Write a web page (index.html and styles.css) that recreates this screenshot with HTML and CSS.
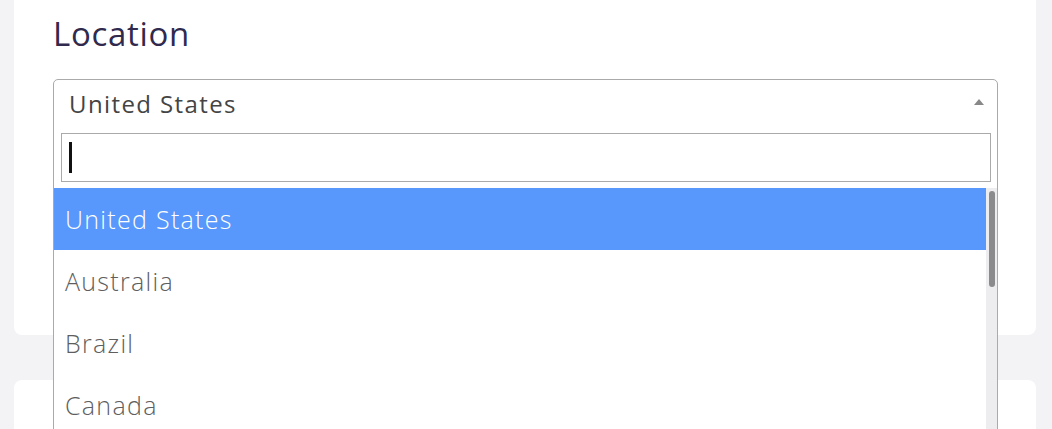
FILE: index.html
```html
<!DOCTYPE html>
<html lang="en">
<head>
<meta charset="utf-8">
<title>Location</title>
<link rel="stylesheet" href="styles.css">
</head>
<body>
<div class="page">
  <section class="card card-location">
    <h2 class="card-title">Location</h2>
    <div class="select">
      <div class="select-box">
        <span class="select-value">United States</span>
        <span class="select-arrow"></span>
      </div>
      <div class="dropdown">
        <div class="search-wrap">
          <div class="search-field"><span class="caret"></span></div>
        </div>
        <div class="results">
          <ul class="options">
            <li class="option option-active">United States</li>
            <li class="option">Australia</li>
            <li class="option">Brazil</li>
            <li class="option">Canada</li>
          </ul>
          <div class="scrollbar"><div class="thumb"></div></div>
        </div>
      </div>
    </div>
  </section>
  <section class="card card-next"></section>
</div>
</body>
</html>
```
FILE: styles.css
```css
html, body {
  margin: 0;
  padding: 0;
}
body {
  background: #f3f3f6;
  font-family: "Open Sans", Lato, sans-serif;
  overflow: hidden;
  height: 429px;
}
.page {
  display: flex;
  flex-direction: column;
  gap: 45px;
  padding: 0 16px 0 14px;
}
.card {
  background: #ffffff;
  border-radius: 8px;
}
.card-location {
  height: 345px;
  margin-top: -10px;
  padding: 10px 39px 0 39px;
  box-sizing: border-box;
}
.card-next {
  height: 80px;
}
.card-title {
  margin: 0;
  padding-top: 12px;
  height: 79px;
  box-sizing: border-box;
  font-size: 33px;
  line-height: 44px;
  font-weight: 400;
  color: #2f2a4e;
  letter-spacing: 0.7px;
}
.select {
  position: relative;
  width: 945px;
}
.select-box {
  height: 48px;
  box-sizing: border-box;
  border: 1px solid #aaaaaa;
  border-radius: 5px 5px 0 0;
  display: flex;
  align-items: center;
  padding: 0 13px 0 15px;
}
.select-value {
  flex: 1;
  font-size: 24px;
  color: #444444;
  font-weight: 400;
  letter-spacing: 1.4px;
}
.select-arrow {
  width: 0;
  height: 0;
  border-left: 5px solid transparent;
  border-right: 5px solid transparent;
  border-bottom: 6px solid #888888;
  margin-top: -2px;
}
.dropdown {
  position: absolute;
  top: 47px;
  left: 0;
  width: 945px;
  box-sizing: border-box;
  border: 1px solid #aaaaaa;
  border-top: none;
  background: #ffffff;
  height: 400px;
}
.search-wrap {
  padding: 7px 6px 6px 7px;
}
.search-field {
  height: 49px;
  box-sizing: border-box;
  border: 1px solid #aaaaaa;
  display: flex;
  align-items: center;
  padding-left: 7px;
}
.caret {
  width: 3px;
  height: 31px;
  background: #111111;
}
.results {
  display: flex;
}
.options {
  list-style: none;
  margin: 0;
  padding: 0;
  flex: 1;
}
.option {
  height: 62px;
  display: flex;
  align-items: center;
  padding-left: 11px;
  font-size: 25px;
  font-weight: 300;
  color: #5e5e5e;
  letter-spacing: 1.3px;
}
.option-active {
  background: #5897fb;
  color: #ffffff;
}
.scrollbar {
  width: 11px;
  background: #ededef;
  display: flex;
  justify-content: center;
  padding-top: 3px;
  box-sizing: border-box;
}
.thumb {
  width: 6px;
  height: 96px;
  border-radius: 3px;
  background: #8b8b8d;
}
```
